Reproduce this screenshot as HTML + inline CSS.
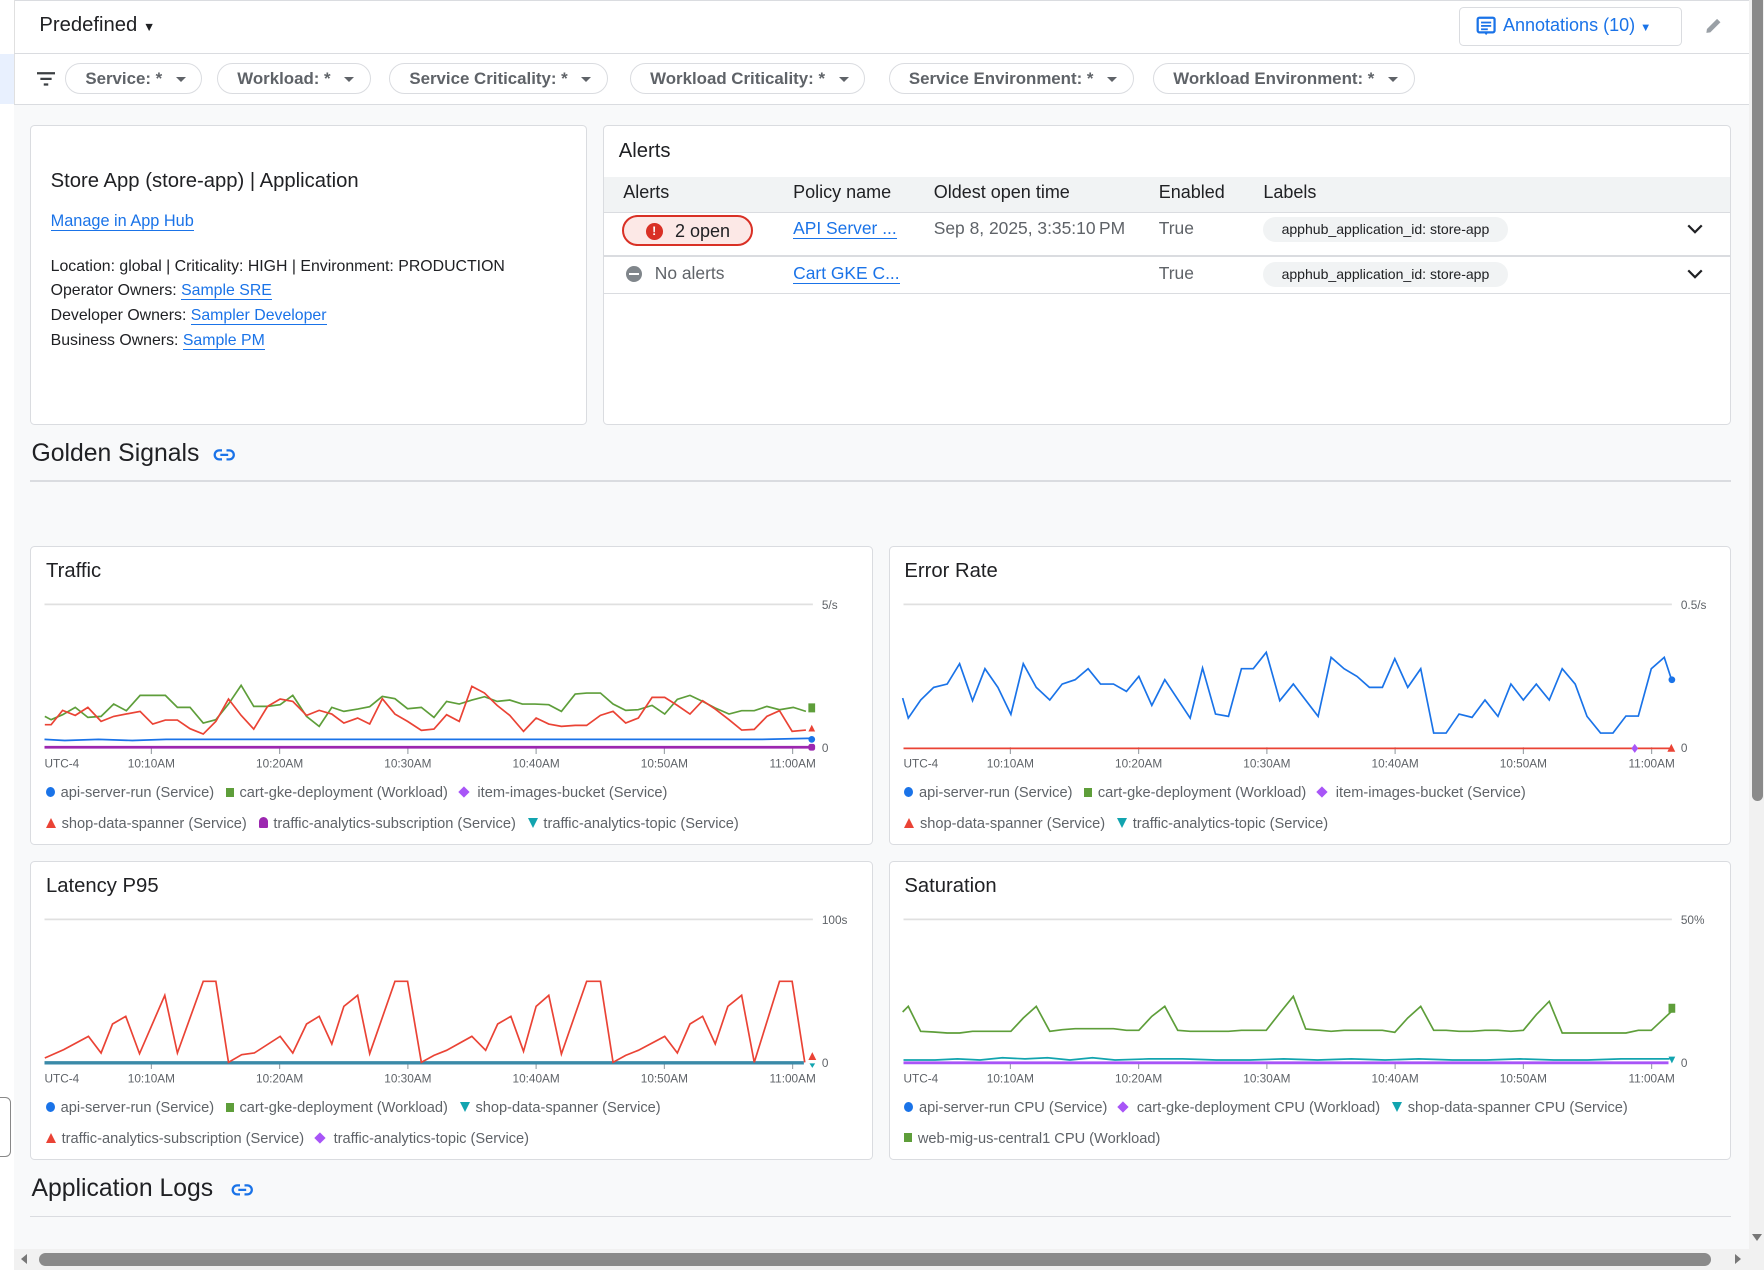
<!DOCTYPE html>
<html><head><meta charset="utf-8">
<style>
html,body{margin:0;padding:0;overflow:hidden;background:#fff;width:1764px;height:1270px}
#w{zoom:1.125;width:1568px;height:1129px;position:relative;font-family:"Liberation Sans",Arial,sans-serif;color:#202124;overflow:hidden;background:#fff}
.abs{position:absolute}
.chip{position:absolute;top:56px;height:26px;border:1px solid #dadce0;border-radius:14px;font-size:15px;font-weight:bold;color:#5f6368;line-height:26px;padding:0 0 0 17px;box-sizing:content-box;white-space:nowrap}
.chip:after{content:"";display:inline-block;margin-left:12px;margin-right:14px;border-left:5px solid transparent;border-right:5px solid transparent;border-top:5px solid #5f6368;vertical-align:middle}
.card{position:absolute;background:#fff;border:1px solid #dadce0;border-radius:4px;box-sizing:border-box}
a{color:#1a73e8;text-decoration:none;border-bottom:1px solid #1a73e8}
.ln{position:absolute;left:45px;font-size:14.1px;white-space:nowrap}
.th{position:absolute;top:162px;font-size:16px;font-weight:500;color:#202124}
.lbl{position:absolute;height:22px;left:1123px;width:217px;border-radius:11px;background:#f1f3f4;font-size:12.5px;line-height:22px;text-align:center;color:#202124}
.ct{position:absolute;left:13px;top:12px;font-size:18px;color:#202124}
.lg{position:absolute;font-size:13px;color:#5f6368;white-space:nowrap}
.lg span{margin-right:7px}
.lg i{display:inline-block;margin-right:5px;vertical-align:middle;position:relative;top:-1px}
.dot{width:8px;height:9px;border-radius:50%;background:#1a73e8}
.sq{width:7px;height:8px;background:#5e9e3a}
.dia{width:7px;height:7px;background:#a855f7;transform:rotate(45deg)}
.tu{width:0;height:0;border-left:5px solid transparent;border-right:5px solid transparent;border-bottom:9px solid #ea4335}
.td{width:0;height:0;border-left:5px solid transparent;border-right:5px solid transparent;border-top:9px solid #12a4af}
.bell{width:8px;height:9px;border-radius:4px 4px 1px 1px;background:#9c27b0}
svg text{font-family:"Liberation Sans",Arial,sans-serif;font-size:10.5px;fill:#5f6368}
.h2{position:absolute;left:28px;font-size:22px;color:#202124}
</style></head><body><div id="w">

<div class="abs" style="left:12px;top:0;width:1543px;height:1px;background:#dadce0"></div>
<div class="abs" style="left:12px;top:0;width:1px;height:1129px;background:#e0e0e0"></div>
<div class="abs" style="left:0;top:48px;width:12px;height:44px;background:#e8f0fe"></div>
<div class="abs" style="left:35px;top:12px;font-size:18px;color:#202124">Predefined <span style="font-size:11px">&#9660;</span></div>
<div class="abs" style="left:1297px;top:6px;width:198px;height:35px;border:1px solid #dadce0;border-radius:4px;box-sizing:border-box"></div>
<svg class="abs" style="left:1312px;top:14px" width="18" height="20" viewBox="0 0 18 20"><rect x="1.5" y="1.5" width="15" height="13" rx="1.5" fill="none" stroke="#1a73e8" stroke-width="2"/><path d="M7 14.5 L9 17 L11 14.5" fill="#1a73e8"/><rect x="4.5" y="5" width="9" height="1.6" fill="#1a73e8"/><rect x="4.5" y="8" width="9" height="1.6" fill="#1a73e8"/><rect x="4.5" y="11" width="6" height="1.6" fill="#1a73e8"/></svg>
<div class="abs" style="left:1336px;top:13px;font-size:16px;font-weight:500;color:#1a73e8">Annotations (10) <span style="font-size:10px">&#9660;</span></div>
<svg class="abs" style="left:1514px;top:14px" width="18" height="18" viewBox="0 0 18 18"><path d="M3 15 L3.5 11.5 L12.5 2.5 L15.5 5.5 L6.5 14.5 Z" fill="#9aa0a6"/></svg>
<div class="abs" style="left:12px;top:47px;width:1543px;height:1px;background:#dadce0"></div>

<svg class="abs" style="left:33px;top:63px" width="16" height="14" viewBox="0 0 16 14"><rect x="0" y="1" width="16" height="2" fill="#3c4043"/><rect x="3" y="6" width="10" height="2" fill="#3c4043"/><rect x="6" y="11" width="4" height="2" fill="#3c4043"/></svg>
<div class="chip" style="left:58px">Service: *</div>
<div class="chip" style="left:193px">Workload: *</div>
<div class="chip" style="left:346px">Service Criticality: *</div>
<div class="chip" style="left:560px">Workload Criticality: *</div>
<div class="chip" style="left:790px">Service Environment: *</div>
<div class="chip" style="left:1025px">Workload Environment: *</div>
<div class="abs" style="left:12px;top:92px;width:1543px;height:1037px;background:#f8f9fa;border-top:1px solid #dadce0"></div>

<div class="card" style="left:27px;top:111px;width:495px;height:267px"></div>
<div class="abs" style="left:45px;top:151px;font-size:18px;white-space:nowrap"><span style="font-weight:500">Store App</span> (store-app) | Application</div>
<div class="ln" style="top:188px;font-size:14.5px"><a>Manage in App Hub</a></div>
<div class="ln" style="top:229px">Location: global | <b style="font-weight:500">Criticality:</b> HIGH | <b style="font-weight:500">Environment:</b> PRODUCTION</div>
<div class="ln" style="top:251px">Operator Owners: <a>Sample SRE</a></div>
<div class="ln" style="top:273px">Developer Owners: <a>Sampler Developer</a></div>
<div class="ln" style="top:295px">Business Owners: <a>Sample PM</a></div>

<div class="card" style="left:536px;top:111px;width:1003px;height:267px"></div>
<div class="abs" style="left:550px;top:124px;font-size:18px">Alerts</div>
<div class="abs" style="left:537px;top:157px;width:1001px;height:31px;background:#f1f3f4;border-bottom:1px solid #dadce0"></div>
<div class="th" style="left:554px">Alerts</div>
<div class="th" style="left:705px">Policy name</div>
<div class="th" style="left:830px">Oldest open time</div>
<div class="th" style="left:1030px">Enabled</div>
<div class="th" style="left:1123px">Labels</div>
<div class="abs" style="left:537px;top:227px;width:1001px;height:1px;background:#dadce0"></div>
<div class="abs" style="left:537px;top:260px;width:1001px;height:1px;background:#dadce0"></div>
<div class="abs" style="left:553px;top:191px;width:116px;height:28px;border:2px solid #d93025;border-radius:15px;background:#fce8e6;box-sizing:border-box"></div>
<div class="abs" style="left:574px;top:198px;width:15px;height:15px;border-radius:50%;background:#d93025;color:#fff;font-size:11px;font-weight:bold;text-align:center;line-height:15px">!</div>
<div class="abs" style="left:600px;top:196px;font-size:16px;color:#202124">2 open</div>
<div class="abs" style="left:705px;top:194px;font-size:15.5px"><a>API Server ...</a></div>
<div class="abs" style="left:830px;top:194px;font-size:15.5px;color:#5f6368">Sep 8, 2025, 3:35:10&#8239;PM</div>
<div class="abs" style="left:1030px;top:194px;font-size:15.5px;color:#5f6368">True</div>
<div class="lbl" style="top:193px">apphub_application_id: <b style="font-weight:500">store-app</b></div>
<svg class="abs" style="left:1499px;top:197px" width="16" height="12" viewBox="0 0 16 12"><path d="M2 3 L8 9 L14 3" fill="none" stroke="#202124" stroke-width="2"/></svg>
<div class="abs" style="left:556px;top:236px;width:15px;height:15px;border-radius:50%;background:#80868b"><div style="position:absolute;left:3px;top:6.5px;width:9px;height:2px;background:#fff"></div></div>
<div class="abs" style="left:582px;top:234px;font-size:15.5px;color:#5f6368">No alerts</div>
<div class="abs" style="left:705px;top:234px;font-size:15.5px"><a>Cart GKE C...</a></div>
<div class="abs" style="left:1030px;top:234px;font-size:15.5px;color:#5f6368">True</div>
<div class="lbl" style="top:233px">apphub_application_id: <b style="font-weight:500">store-app</b></div>
<svg class="abs" style="left:1499px;top:237px" width="16" height="12" viewBox="0 0 16 12"><path d="M2 3 L8 9 L14 3" fill="none" stroke="#202124" stroke-width="2"/></svg>

<div class="h2" style="top:391px">Golden Signals</div>
<svg class="abs" style="left:189px;top:397px" width="20" height="14" viewBox="0 0 20 14"><path d="M8 3 H5.5 A4 4 0 0 0 5.5 11 H8 M12 3 H14.5 A4 4 0 0 1 14.5 11 H12 M6.5 7 H13.5" fill="none" stroke="#1a73e8" stroke-width="2"/></svg>
<div class="abs" style="left:27px;top:427px;width:1512px;height:1px;background:#dadce0"></div>

<!-- Traffic -->
<div class="card" style="left:27px;top:485px;width:749px;height:266px">
<div class="ct">Traffic</div>
<svg class="abs" style="left:0;top:0" width="749" height="266">
<line x1="12" y1="51" x2="695" y2="51" stroke="#e0e0e0" stroke-width="1.5"/>
<text x="703" y="55">5/s</text><text x="703" y="182">0</text>
<g stroke="#9aa0a6" stroke-width="1"><line x1="107" y1="178" x2="107" y2="184"/><line x1="221" y1="178" x2="221" y2="184"/><line x1="335" y1="178" x2="335" y2="184"/><line x1="449" y1="178" x2="449" y2="184"/><line x1="563" y1="178" x2="563" y2="184"/><line x1="677" y1="178" x2="677" y2="184"/></g>
<text x="12" y="196">UTC-4</text><text x="107" y="196" text-anchor="middle">10:10AM</text><text x="221" y="196" text-anchor="middle">10:20AM</text><text x="335" y="196" text-anchor="middle">10:30AM</text><text x="449" y="196" text-anchor="middle">10:40AM</text><text x="563" y="196" text-anchor="middle">10:50AM</text><text x="677" y="196" text-anchor="middle">11:00AM</text>
<line x1="12" y1="178" x2="695" y2="178" stroke="#9c27b0" stroke-width="2.5"/>
<polyline points="12,171 30,172 60,171 90,172 120,171 150,171 200,171 250,171 300,171 350,171 400,171 450,171 500,171 550,171 600,171 650,171 695,170" fill="none" stroke="#1a73e8" stroke-width="1.5"/>
<g transform="translate(-27,-5) scale(0.5102,0.2963)">
<polyline vector-effect="non-scaling-stroke" fill="none" stroke="#5e9e3a" stroke-width="1.5" points="77,525 88,535 108,520 130,498 152,528 175,525 197,488 219,508 243,462 287,462 308,498 330,498 353,545 375,535 397,488 419,432 441,495 465,495 487,490 509,462 533,525 555,555 577,498 598,510 622,503 643,496 665,465 687,472 709,502 733,498 755,528 777,480 799,488 821,476 843,466 865,480 887,476 909,488 931,488 955,490 977,510 1001,458 1021,455 1045,455 1067,488 1089,507 1111,505 1135,492 1157,518 1179,474 1201,462 1223,480 1245,500 1269,518 1291,508 1313,508 1335,495 1357,505 1381,498 1403,510"/>
<polyline vector-effect="non-scaling-stroke" fill="none" stroke="#ea4335" stroke-width="1.5" points="77,550 88,550 108,507 130,522 152,498 175,540 197,525 243,510 265,548 287,536 308,536 330,562 353,578 375,540 397,473 419,522 441,563 465,495 487,473 509,480 533,522 555,507 577,518 598,545 622,530 643,548 665,472 687,518 709,540 733,567 755,563 777,520 799,540 821,435 843,455 865,492 887,522 911,570 933,530 955,548 977,555 1001,552 1021,552 1045,522 1067,510 1089,545 1111,530 1135,468 1157,468 1179,492 1201,518 1223,478 1245,503 1269,535 1291,566 1313,564 1335,525 1357,508 1379,570 1403,566"/>
</g>
<rect x="691" y="139" width="6" height="8" fill="#5e9e3a"/>
<path d="M691 164 L697 164 L694 158 Z" fill="#ea4335"/>
<circle cx="694" cy="171" r="3" fill="#1a73e8"/>
<rect x="691" y="175" width="6" height="6" rx="2" fill="#9c27b0"/>
</svg>
<div class="lg" style="left:13px;top:212px"><span><i class="dot"></i>api-server-run (Service)</span> <span><i class="sq"></i>cart-gke-deployment (Workload)</span> <span><i class="dia"></i> item-images-bucket (Service)</span></div>
<div class="lg" style="left:13px;top:239px"><span><i class="tu"></i>shop-data-spanner (Service)</span> <span><i class="bell"></i>traffic-analytics-subscription (Service)</span> <span><i class="td"></i>traffic-analytics-topic (Service)</span></div>
</div>

<!-- Error Rate -->
<div class="card" style="left:790px;top:485px;width:749px;height:266px">
<div class="ct">Error Rate</div>
<svg class="abs" style="left:0;top:0" width="749" height="266">
<line x1="12" y1="51" x2="695" y2="51" stroke="#e0e0e0" stroke-width="1.5"/>
<text x="703" y="55">0.5/s</text><text x="703" y="182">0</text>
<g stroke="#9aa0a6" stroke-width="1"><line x1="107" y1="178" x2="107" y2="184"/><line x1="221" y1="178" x2="221" y2="184"/><line x1="335" y1="178" x2="335" y2="184"/><line x1="449" y1="178" x2="449" y2="184"/><line x1="563" y1="178" x2="563" y2="184"/><line x1="677" y1="178" x2="677" y2="184"/></g>
<text x="12" y="196">UTC-4</text><text x="107" y="196" text-anchor="middle">10:10AM</text><text x="221" y="196" text-anchor="middle">10:20AM</text><text x="335" y="196" text-anchor="middle">10:30AM</text><text x="449" y="196" text-anchor="middle">10:40AM</text><text x="563" y="196" text-anchor="middle">10:50AM</text><text x="677" y="196" text-anchor="middle">11:00AM</text>
<line x1="12" y1="179" x2="695" y2="179" stroke="#ea4335" stroke-width="1.5"/>
<g transform="translate(-7.8,-5) scale(0.5011,0.2963)">
<polyline vector-effect="non-scaling-stroke" fill="none" stroke="#1a73e8" stroke-width="1.5" points="38,470 48,530 70,476 93,438 117,428 139,367 162,478 184,382 207,438 230,519 252,367 275,438 299,476 321,428 344,415 367,382 389,428 412,428 435,450 457,405 480,492 503,415 548,530 570,380 593,518 616,525 639,382 660,382 683,333 707,478 731,428 775,525 798,348 821,382 844,405 866,438 889,438 911,352 934,438 957,382 980,575 1002,575 1025,518 1048,528 1071,476 1094,525 1117,428 1139,476 1162,428 1185,476 1208,382 1231,428 1252,525 1276,575 1298,575 1321,524 1343,524 1366,382 1389,348 1402,415"/>
</g>
<circle cx="695" cy="118" r="3" fill="#1a73e8"/>
<path d="M662 175 L665 179 L662 183 L659 179 Z" fill="#a855f7"/>
<path d="M691 182 L698 182 L694.5 175 Z" fill="#ea4335"/>
</svg>
<div class="lg" style="left:13px;top:212px"><span><i class="dot"></i>api-server-run (Service)</span> <span><i class="sq"></i>cart-gke-deployment (Workload)</span> <span><i class="dia"></i> item-images-bucket (Service)</span></div>
<div class="lg" style="left:13px;top:239px"><span><i class="tu"></i>shop-data-spanner (Service)</span> <span><i class="td"></i>traffic-analytics-topic (Service)</span></div>
</div>

<!-- Latency -->
<div class="card" style="left:27px;top:765px;width:749px;height:266px">
<div class="ct">Latency P95</div>
<svg class="abs" style="left:0;top:0" width="749" height="266">
<line x1="12" y1="51" x2="695" y2="51" stroke="#e0e0e0" stroke-width="1.5"/>
<text x="703" y="55">100s</text><text x="703" y="182">0</text>
<g stroke="#9aa0a6" stroke-width="1"><line x1="107" y1="178" x2="107" y2="184"/><line x1="221" y1="178" x2="221" y2="184"/><line x1="335" y1="178" x2="335" y2="184"/><line x1="449" y1="178" x2="449" y2="184"/><line x1="563" y1="178" x2="563" y2="184"/><line x1="677" y1="178" x2="677" y2="184"/></g>
<text x="12" y="196">UTC-4</text><text x="107" y="196" text-anchor="middle">10:10AM</text><text x="221" y="196" text-anchor="middle">10:20AM</text><text x="335" y="196" text-anchor="middle">10:30AM</text><text x="449" y="196" text-anchor="middle">10:40AM</text><text x="563" y="196" text-anchor="middle">10:50AM</text><text x="677" y="196" text-anchor="middle">11:00AM</text>
<line x1="12" y1="178.5" x2="687" y2="178.5" stroke="#3a8aa8" stroke-width="3"/>
<g transform="translate(-27,-0.6) scale(0.5102,0.2963)">
<polyline vector-effect="non-scaling-stroke" fill="none" stroke="#ea4335" stroke-width="1.5" points="77,590 110,565 153,525 175,575 195,488 218,465 242,577 286,402 308,575 353,360 375,360 397,603 420,580 442,575 487,525 509,575 533,488 555,465 577,548 598,435 622,402 643,577 687,360 709,360 733,603 755,582 777,567 821,525 845,567 866,488 889,465 911,570 933,435 955,402 977,578 1021,360 1045,360 1067,603 1089,582 1111,567 1157,525 1179,575 1201,488 1223,465 1245,548 1267,435 1291,402 1313,603 1357,360 1379,360 1401,603"/>
</g>
<path d="M691 176 L698 176 L694.5 169 Z" fill="#ea4335"/>
<path d="M692 179 L697 179 L694.5 183 Z" fill="#12a4af"/>
</svg>
<div class="lg" style="left:13px;top:212px"><span><i class="dot"></i>api-server-run (Service)</span> <span><i class="sq"></i>cart-gke-deployment (Workload)</span> <span><i class="td"></i>shop-data-spanner (Service)</span></div>
<div class="lg" style="left:13px;top:239px"><span><i class="tu"></i>traffic-analytics-subscription (Service)</span> <span><i class="dia"></i> traffic-analytics-topic (Service)</span></div>
</div>

<!-- Saturation -->
<div class="card" style="left:790px;top:765px;width:749px;height:266px">
<div class="ct">Saturation</div>
<svg class="abs" style="left:0;top:0" width="749" height="266">
<line x1="12" y1="51" x2="695" y2="51" stroke="#e0e0e0" stroke-width="1.5"/>
<text x="703" y="55">50%</text><text x="703" y="182">0</text>
<g stroke="#9aa0a6" stroke-width="1"><line x1="107" y1="178" x2="107" y2="184"/><line x1="221" y1="178" x2="221" y2="184"/><line x1="335" y1="178" x2="335" y2="184"/><line x1="449" y1="178" x2="449" y2="184"/><line x1="563" y1="178" x2="563" y2="184"/><line x1="677" y1="178" x2="677" y2="184"/></g>
<text x="12" y="196">UTC-4</text><text x="107" y="196" text-anchor="middle">10:10AM</text><text x="221" y="196" text-anchor="middle">10:20AM</text><text x="335" y="196" text-anchor="middle">10:30AM</text><text x="449" y="196" text-anchor="middle">10:40AM</text><text x="563" y="196" text-anchor="middle">10:50AM</text><text x="677" y="196" text-anchor="middle">11:00AM</text>
<line x1="12" y1="178.5" x2="692" y2="178.5" stroke="#a855f7" stroke-width="2.5"/>
<polyline points="12,176 40,176 60,175 80,176 100,174 120,175 140,174 160,176 180,174 200,176 230,175 260,175 290,176 320,176 350,175 380,176 410,175 440,176 470,175 500,176 530,176 560,175 590,176 620,176 650,175 693,175" fill="none" stroke="#12a4af" stroke-width="1.5"/>
<g transform="translate(-7.8,-0.6) scale(0.5011,0.2963)">
<polyline vector-effect="non-scaling-stroke" fill="none" stroke="#5e9e3a" stroke-width="1.5" points="38,452 48,435 70,510 93,512 117,515 139,515 162,510 184,510 230,510 252,470 275,435 299,510 321,505 344,502 412,502 435,507 457,507 480,465 503,435 526,507 548,510 616,510 639,507 683,507 707,455 731,405 753,503 798,510 821,507 889,507 911,513 934,470 957,435 980,507 1002,507 1025,510 1048,510 1071,507 1094,507 1117,510 1139,507 1162,460 1185,420 1208,515 1321,515 1343,507 1366,507 1402,450"/>
</g>
<rect x="692" y="126" width="6" height="8" fill="#5e9e3a"/>
<path d="M692 173 L698 173 L695 179 Z" fill="#12a4af"/>
</svg>
<div class="lg" style="left:13px;top:212px"><span><i class="dot"></i>api-server-run CPU (Service)</span> <span><i class="dia"></i> cart-gke-deployment CPU (Workload)</span> <span><i class="td"></i>shop-data-spanner CPU (Service)</span></div>
<div class="lg" style="left:13px;top:239px"><span><i class="sq"></i>web-mig-us-central1 CPU (Workload)</span></div>
</div>

<div class="h2" style="top:1044px">Application Logs</div>
<svg class="abs" style="left:205px;top:1051px" width="20" height="14" viewBox="0 0 20 14"><path d="M8 3 H5.5 A4 4 0 0 0 5.5 11 H8 M12 3 H14.5 A4 4 0 0 1 14.5 11 H12 M6.5 7 H13.5" fill="none" stroke="#1a73e8" stroke-width="2"/></svg>
<div class="abs" style="left:27px;top:1081px;width:1512px;height:1px;background:#dadce0"></div>

<div class="abs" style="left:1555px;top:0;width:13px;height:1129px;background:#f1f1f1"></div>
<div class="abs" style="left:1557px;top:0;width:10px;height:712px;background:#8a8a8a;border-radius:0 0 5px 5px"></div>
<div class="abs" style="left:1557px;top:1097px;width:0;height:0;border-left:5px solid transparent;border-right:5px solid transparent;border-top:7px solid #777"></div>
<div class="abs" style="left:12px;top:1110px;width:1543px;height:19px;background:#f1f1f1"></div>
<div class="abs" style="left:35px;top:1114px;width:1486px;height:11px;background:#8a8a8a;border-radius:6px"></div>
<div class="abs" style="left:19px;top:1115px;width:0;height:0;border-top:5px solid transparent;border-bottom:5px solid transparent;border-right:6px solid #777"></div>
<div class="abs" style="left:1542px;top:1115px;width:0;height:0;border-top:5px solid transparent;border-bottom:5px solid transparent;border-left:6px solid #777"></div>
<div class="abs" style="left:0;top:975px;width:9px;height:52px;border:1px solid #888;border-left:none;border-radius:0 5px 5px 0"></div>
</div></body></html>
